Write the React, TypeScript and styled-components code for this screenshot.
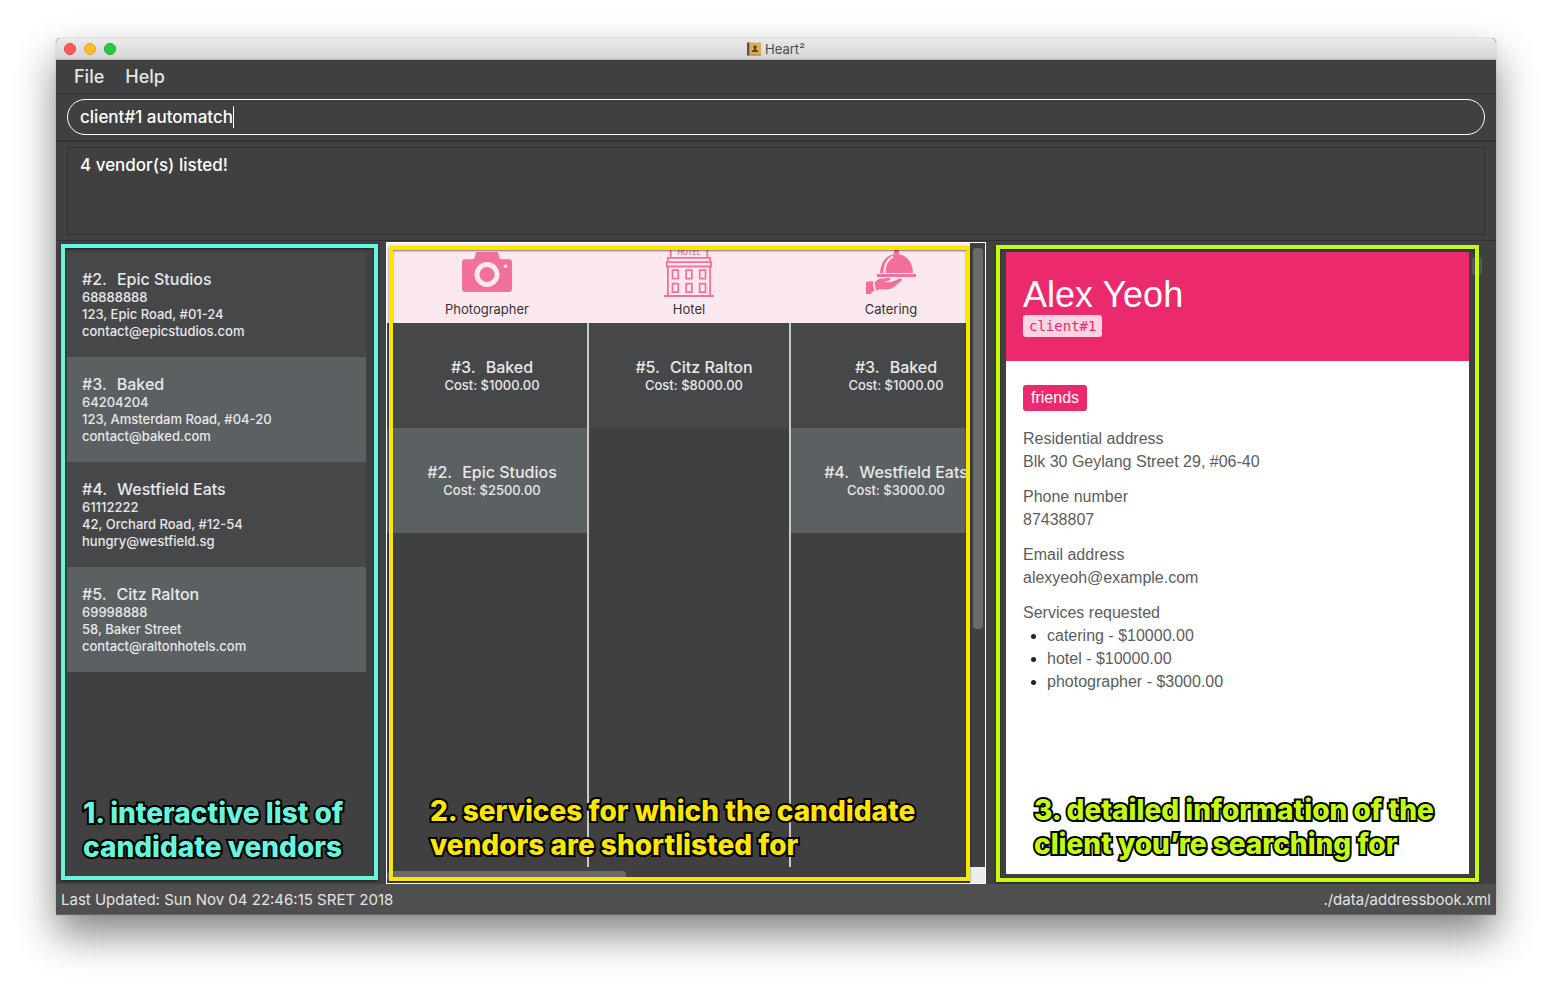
import React, { useState } from "react";
import styled, { createGlobalStyle } from "styled-components";

const PINK = "#ec296d";
const ICON_PINK = "#f3709d";

const GlobalStyle = createGlobalStyle`
  *, *::before, *::after { box-sizing: border-box; }
  body { margin: 0; background: #fff; }
  h1, h2, p, ul, dl, dd { margin: 0; padding: 0; font-weight: inherit; }
  button, input, textarea { font: inherit; color: inherit; }
`;

const Desktop = styled.div`
  display: flex;
  min-height: 100vh;
  padding: 38px 56px 74px;
  font-family: Inter, "Liberation Sans", sans-serif;
`;

const Window = styled.main`
  flex: 1;
  min-width: 0;
  display: flex;
  flex-direction: column;
  overflow: hidden;
  background: #404040;
  border-radius: 5px 5px 0 0;
  box-shadow: 0 0 1px rgba(0, 0, 0, 0.5), 0 20px 40px rgba(0, 0, 0, 0.48);
`;

const TitleBar = styled.header`
  display: grid;
  grid-template-columns: 1fr auto 1fr;
  align-items: center;
  height: 22px;
  padding: 0 8px;
  background: linear-gradient(#ebebeb, #d4d4d4);
  border-bottom: 1px solid #b4b4b4;
`;

const Lights = styled.div`
  display: flex;
  gap: 8px;
`;

const Light = styled.button<{ $fill: string; $edge: string }>`
  width: 12px;
  height: 12px;
  padding: 0;
  border: 1px solid ${(p) => p.$edge};
  border-radius: 50%;
  background: ${(p) => p.$fill};
`;

const Title = styled.h1`
  display: flex;
  align-items: center;
  gap: 4px;
  color: #4c4c4c;
  font-size: 13px;
  line-height: 20px;
`;

const MenuBar = styled.nav`
  display: flex;
  gap: 21px;
  height: 34px;
  padding: 0 18px;
  border-bottom: 1px solid #303030;
`;

const MenuButton = styled.button`
  padding: 0;
  border: 0;
  background: none;
  color: #e4e4e4;
  font-size: 18px;
  font-weight: 500;
  line-height: 33px;
`;

const CommandBar = styled.div`
  padding: 5px 11px;
  border-bottom: 2px solid #333;
`;

const CommandField = styled.label`
  display: flex;
  align-items: center;
  height: 36px;
  padding: 0 12px;
  border: 1px solid #fff;
  border-radius: 18px;
`;

const CommandInput = styled.input`
  field-sizing: content;
  min-width: 0;
  padding: 0;
  border: 0;
  outline: 0;
  background: none;
  caret-color: transparent;
  color: #fff;
  font-size: 17px;
  font-weight: 500;
  line-height: 24px;
`;

const Caret = styled.span`
  width: 1px;
  height: 22px;
  background: #fff;
`;

const ResultBar = styled.div`
  display: flex;
  padding: 5px 11px;
  border-bottom: 1px solid #303030;
`;

const ResultText = styled.textarea`
  flex: 1;
  height: 88px;
  padding: 5px 12px;
  border: 1px solid #303030;
  outline: 0;
  resize: none;
  background: none;
  color: #fff;
  font-size: 17px;
  font-weight: 500;
  line-height: 24px;
`;

const Panels = styled.div`
  flex: 1;
  display: grid;
  grid-template-columns: minmax(0, 33fr) minmax(0, 60fr) minmax(0, 51fr);
`;

const Panel = styled.section<{ $pad: string }>`
  position: relative;
  display: flex;
  padding: ${(p) => p.$pad};
`;

const Highlight = styled.div<{ $color: string; $inset: string; $pad: string }>`
  position: absolute;
  inset: ${(p) => p.$inset};
  z-index: 1;
  display: flex;
  align-items: flex-end;
  padding: ${(p) => p.$pad};
  border: 4px solid ${(p) => p.$color};
  box-shadow: 0 1px 2px rgba(0, 0, 0, 0.5), inset 0 1px 2px rgba(0, 0, 0, 0.5);
  color: ${(p) => p.$color};
  pointer-events: none;
`;

const Caption = styled.p`
  font-size: 28px;
  font-weight: 800;
  line-height: 34px;
  white-space: nowrap;
  -webkit-text-stroke: 4px #000;
  paint-order: stroke fill;
  text-shadow: 0 1px 2px rgba(0, 0, 0, 0.5);
`;

const VendorList = styled.ul`
  flex: 1;
  min-width: 0;
  list-style: none;
`;

const VendorCard = styled.li<{ $alt: boolean; $centered?: boolean }>`
  height: 105px;
  padding: ${(p) => (p.$centered ? "35px 0 0 10px" : "18px 15px 0")};
  background: ${(p) => (p.$alt ? "#5b6062" : "#464749")};
  color: #e8e8e8;
  font-size: 13px;
  font-weight: 500;
  line-height: 17px;
  text-align: ${(p) => (p.$centered ? "center" : "left")};
  white-space: nowrap;
`;

const VendorName = styled.h2`
  display: inline-flex;
  gap: 10px;
  font-size: 16px;
  line-height: 19px;
  vertical-align: top;
`;

const Board = styled.div`
  flex: 1;
  min-width: 0;
  display: grid;
  grid-template: minmax(0, 1fr) 16px / minmax(0, 1fr) 15px;
  border: 1px solid #fff;
`;

const BoardView = styled.div`
  display: flex;
  overflow: hidden;
`;

const ServiceColumn = styled.section`
  flex: 1 0 202px;
  display: flex;
  flex-direction: column;
`;

const ServiceHead = styled.header`
  display: flex;
  flex-direction: column;
  align-items: center;
  gap: 4px;
  height: 80px;
  padding: 4px 2px 0 0;
  background: #fce9f0;
  color: #333;
  font-size: 13px;
  line-height: 16px;
`;

const ServiceList = styled.ul`
  flex: 1;
  list-style: none;
  border-right: 2px solid #c9c9c9;
`;

const VerticalTrack = styled.div`
  padding: 5px 2px 5px 3px;
`;

const VerticalThumb = styled.div`
  height: 62%;
  border-radius: 4px;
  background: #6b6b6b;
`;

const HorizontalTrack = styled.div`
  padding: 4px 0;
`;

const HorizontalThumb = styled.div`
  width: 41%;
  height: 10px;
  border-radius: 4px;
  background: #6b6b6b;
`;

const Corner = styled.div`
  background: #ececec;
`;

const ClientPage = styled.article`
  flex: 1;
  min-width: 0;
  background: #fff;
  color: #5c5c5c;
  font-family: "Liberation Sans", Arial, sans-serif;
  font-size: 16px;
  line-height: 23px;
`;

const ClientHead = styled.header`
  display: flex;
  flex-direction: column;
  align-items: flex-start;
  height: 109px;
  padding: 23px 17px 0;
  background: ${PINK};
  color: #fff;
`;

const ClientName = styled.h2`
  font-size: 36px;
  line-height: 40px;
`;

const ClientId = styled.code`
  padding: 0 6px;
  border-radius: 3px;
  background: #f9d5e3;
  color: ${PINK};
  font-family: "DejaVu Sans Mono", monospace;
  font-size: 14px;
  line-height: 22px;
`;

const ClientBody = styled.div`
  display: flex;
  flex-direction: column;
  align-items: flex-start;
  gap: 16px;
  padding: 24px 17px;
`;

const Tag = styled.span`
  padding: 0 8px;
  border-radius: 3px;
  background: ${PINK};
  color: #fff;
  line-height: 26px;
`;

const Details = styled.dl`
  display: flex;
  flex-direction: column;
  gap: 12px;
`;

const Services = styled.ul`
  padding-left: 24px;

  li::marker { color: #222; }
`;

const ClientThumb = styled.div`
  width: 10px;
  height: 18px;
  margin: 5px 0 0 3px;
  border-radius: 3px;
  background: #5a5a5a;
`;

const StatusBar = styled.footer`
  display: flex;
  justify-content: space-between;
  padding: 2px 5px 0;
  background: #4f4f4f;
  border-bottom: 1px solid #666;
  color: #e4e4e4;
  font-size: 15px;
  line-height: 28px;
`;

const BookIcon = () => (
  <svg width="14" height="14" viewBox="0 0 14 14" aria-hidden="true">
    <rect width="14" height="13" y="0.5" rx="0.5" fill="#deaa55" />
    <rect width="2" height="13" y="0.5" fill="#57504c" />
    <rect x="2" y="0.5" width="1" height="13" fill="#a9937b" />
    <path d="M2 13h12" stroke="#b5792b" />
    <path d="M8 3.4a1.7 1.7 0 0 1 1 3.1v1.3l2.2.9V10H4.800V8.700L7 7.800V6.500A1.700 1.700 0 0 1 8 3.400z" fill="#564026" />
  </svg>
);

const CameraIcon = () => (
  <svg width="50" height="50" viewBox="0 0 50 50" aria-hidden="true">
    <path
      fill={ICON_PINK}
      d="M15 5h20a1 1 0 0 1 1 .8L37.500 11a2 2 0 0 0 1.500 1.300H47a3 3 0 0 1 3 3V42a3 3 0 0 1-3 3H3a3 3 0 0 1-3-3V15.300a3 3 0 0 1 3-3h8a2 2 0 0 0 1.500-1.300L14 5.800A1 1 0 0 1 15 5z"
    />
    <circle cx="25" cy="27.500" r="10" fill="none" stroke="#fce9f0" strokeWidth="5" />
    <circle cx="43.500" cy="19.300" r="1.800" fill="#fce9f0" />
  </svg>
);

const HotelIcon = () => (
  <svg width="50" height="50" viewBox="0 0 50 50" aria-hidden="true">
    <g fill="none" stroke={ICON_PINK} strokeWidth="1.700">
      <path d="M6.700 10.500V0M43.300 10.500V0" />
      <path d="M3.900 14.500v-3.700h42.200v3.700" />
      <path d="M2.800 15.200h44.400v4.300H2.800z" strokeWidth="1.800" />
      <path d="M3.900 19.500V48M46.100 19.500V48" strokeWidth="1.800" />
      <path d="M0 49h50" strokeWidth="2" />
      <path d="M8.500 23.200h5.800v8.400H8.500zM22.100 23.200h5.800v8.400h-5.800zM35.700 23.200h5.800v8.400h-5.800zM8.500 36.700h5.800v8.400H8.500zM22.100 36.700h5.800v8.400h-5.800zM35.700 36.700h5.800v8.400h-5.800z" />
    </g>
    <text x="25" y="8" textAnchor="middle" fontSize="7" fontWeight="600" fontFamily="Inter, sans-serif" fill={ICON_PINK}>
      HOTEL
    </text>
  </svg>
);

const CateringIcon = () => (
  <svg width="50" height="50" viewBox="0 0 50 50" aria-hidden="true">
    <g fill={ICON_PINK}>
      <path d="M28 8V2h5v6z" />
      <path d="M14 26C14.300 15.500 20.500 7 30.500 7S46.700 15.500 47 26z" />
      <rect x="11" y="27" width="39" height="3" />
      <path d="M0 35.200l3-1h4.600L7 38l1.500 6.200-3 .8-.3 2H0z" />
      <path d="M8.600 35.500c2.400-3 5.400-4.400 8.400-4 2.400.4 4-.7 6.500-.4 1.400.3 1.200 2.200-.2 2.500l-5.500 1.200c3.400.8 7 .5 9.500-.5l6.800-2.700c1.700-.4 2.600 1 1.400 2.100L28 40c-3 2.300-7 2.700-10.500 2.400-3-.2-5 .1-7.600 1.300z" />
    </g>
    <path d="M18.400 26c0-7.500 2.800-13.200 8.600-16.600" fill="none" stroke="#fce9f0" strokeWidth="2" />
  </svg>
);

const vendors = [
  { id: 2, name: "Epic Studios", phone: "68888888", address: "123, Epic Road, #01-24", email: "contact@epicstudios.com" },
  { id: 3, name: "Baked", phone: "64204204", address: "123, Amsterdam Road, #04-20", email: "contact@baked.com" },
  { id: 4, name: "Westfield Eats", phone: "61112222", address: "42, Orchard Road, #12-54", email: "hungry@westfield.sg" },
  { id: 5, name: "Citz Ralton", phone: "69998888", address: "58, Baker Street", email: "contact@raltonhotels.com" },
];

const services = [
  {
    label: "Photographer",
    Icon: CameraIcon,
    offers: [
      { id: 3, name: "Baked", cost: "$1000.00" },
      { id: 2, name: "Epic Studios", cost: "$2500.00" },
    ],
  },
  { label: "Hotel", Icon: HotelIcon, offers: [{ id: 5, name: "Citz Ralton", cost: "$8000.00" }] },
  {
    label: "Catering",
    Icon: CateringIcon,
    offers: [
      { id: 3, name: "Baked", cost: "$1000.00" },
      { id: 4, name: "Westfield Eats", cost: "$3000.00" },
    ],
  },
];

const contact = [
  ["Residential address", "Blk 30 Geylang Street 29, #06-40"],
  ["Phone number", "87438807"],
  ["Email address", "alexyeoh@example.com"],
];

const requested = ["catering - $10000.00", "hotel - $10000.00", "photographer - $3000.00"];

export default function App() {
  const [command, setCommand] = useState("client#1 automatch");

  return (
    <Desktop>
      <GlobalStyle />
      <Window>
        <TitleBar>
          <Lights>
            <Light $fill="#ff5f57" $edge="#e2463f" aria-label="Close" />
            <Light $fill="#ffbd2e" $edge="#e0a028" aria-label="Minimize" />
            <Light $fill="#28c940" $edge="#1eab2f" aria-label="Zoom" />
          </Lights>
          <Title>
            <BookIcon />
            Heart²
          </Title>
        </TitleBar>

        <MenuBar>
          <MenuButton>File</MenuButton>
          <MenuButton>Help</MenuButton>
        </MenuBar>

        <CommandBar>
          <CommandField>
            <CommandInput
              aria-label="Command"
              value={command}
              onChange={(e) => setCommand(e.target.value)}
            />
            <Caret />
          </CommandField>
        </CommandBar>

        <ResultBar>
          <ResultText aria-label="Result" readOnly value="4 vendor(s) listed!" />
        </ResultBar>

        <Panels>
          <Panel $pad="11px 20px 11px 11px">
            <VendorList>
              {vendors.map((v, i) => (
                <VendorCard key={v.id} $alt={i % 2 === 1}>
                  <VendorName>
                    <span>#{v.id}.</span>
                    <span>{v.name}</span>
                  </VendorName>
                  <p>{v.phone}</p>
                  <p>{v.address}</p>
                  <p>{v.email}</p>
                </VendorCard>
              ))}
            </VendorList>
            <Highlight $color="#66f5dd" $inset="3px 8px 4px 5px" $pad="0 0 12px 18px">
              <Caption>
                1. interactive list of
                <br />
                candidate vendors
              </Caption>
            </Highlight>
          </Panel>

          <Panel $pad="1px 0 0">
            <Board>
              <BoardView>
                {services.map(({ label, Icon, offers }) => (
                  <ServiceColumn key={label}>
                    <ServiceHead>
                      <Icon />
                      {label}
                    </ServiceHead>
                    <ServiceList>
                      {offers.map((o, i) => (
                        <VendorCard key={o.id} $alt={i % 2 === 1} $centered>
                          <VendorName>
                            <span>#{o.id}.</span>
                            <span>{o.name}</span>
                          </VendorName>
                          <p>Cost: {o.cost}</p>
                        </VendorCard>
                      ))}
                    </ServiceList>
                  </ServiceColumn>
                ))}
              </BoardView>
              <VerticalTrack>
                <VerticalThumb />
              </VerticalTrack>
              <HorizontalTrack>
                <HorizontalThumb />
              </HorizontalTrack>
              <Corner />
            </Board>
            <Highlight $color="#ffe600" $inset="5px 16px 3px 3px" $pad="0 0 15px 37px">
              <Caption>
                2. services for which the candidate
                <br />
                vendors are shortlisted for
              </Caption>
            </Highlight>
          </Panel>

          <Panel $pad="11px 14px 10px 20px">
            <ClientPage>
              <ClientHead>
                <ClientName>Alex Yeoh</ClientName>
                <ClientId>client#1</ClientId>
              </ClientHead>
              <ClientBody>
                <Tag>friends</Tag>
                <Details>
                  {contact.map(([term, value]) => (
                    <div key={term}>
                      <dt>{term}</dt>
                      <dd>{value}</dd>
                    </div>
                  ))}
                  <div>
                    <dt>Services requested</dt>
                    <dd>
                      <Services>
                        {requested.map((r) => (
                          <li key={r}>{r}</li>
                        ))}
                      </Services>
                    </dd>
                  </div>
                </Details>
              </ClientBody>
            </ClientPage>
            <ClientThumb />
            <Highlight $color="#c4fb12" $inset="4px 17px 2px 10px" $pad="0 0 17px 34px">
              <Caption>
                3. detailed information of the
                <br />
                client you’re searching for
              </Caption>
            </Highlight>
          </Panel>
        </Panels>

        <StatusBar>
          <span>Last Updated: Sun Nov 04 22:46:15 SRET 2018</span>
          <span>./data/addressbook.xml</span>
        </StatusBar>
      </Window>
    </Desktop>
  );
}
